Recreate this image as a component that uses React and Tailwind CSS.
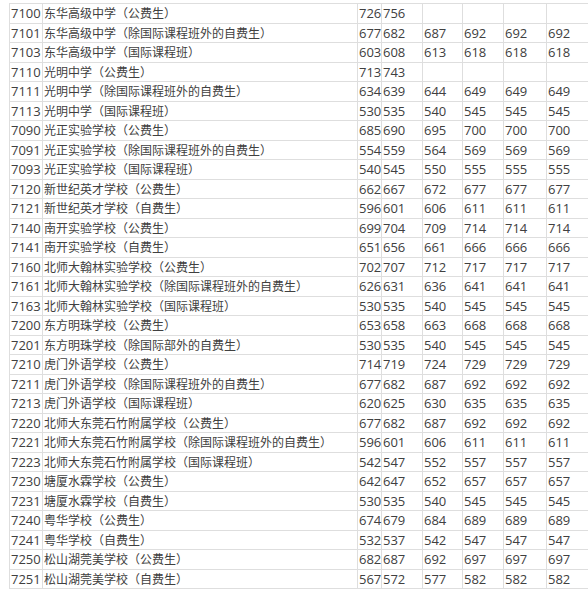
import React from 'react';

const rows = [
  ['7100', '东华高级中学（公费生）', ['726', '756']],
  ['7101', '东华高级中学（除国际课程班外的自费生）', ['677', '682', '687', '692', '692', '692']],
  ['7103', '东华高级中学（国际课程班）', ['603', '608', '613', '618', '618', '618']],
  ['7110', '光明中学（公费生）', ['713', '743']],
  ['7111', '光明中学（除国际课程班外的自费生）', ['634', '639', '644', '649', '649', '649']],
  ['7113', '光明中学（国际课程班）', ['530', '535', '540', '545', '545', '545']],
  ['7090', '光正实验学校（公费生）', ['685', '690', '695', '700', '700', '700']],
  ['7091', '光正实验学校（除国际课程班外的自费生）', ['554', '559', '564', '569', '569', '569']],
  ['7093', '光正实验学校（国际课程班）', ['540', '545', '550', '555', '555', '555']],
  ['7120', '新世纪英才学校（公费生）', ['662', '667', '672', '677', '677', '677']],
  ['7121', '新世纪英才学校（自费生）', ['596', '601', '606', '611', '611', '611']],
  ['7140', '南开实验学校（公费生）', ['699', '704', '709', '714', '714', '714']],
  ['7141', '南开实验学校（自费生）', ['651', '656', '661', '666', '666', '666']],
  ['7160', '北师大翰林实验学校（公费生）', ['702', '707', '712', '717', '717', '717']],
  ['7161', '北师大翰林实验学校（除国际课程班外的自费生）', ['626', '631', '636', '641', '641', '641']],
  ['7163', '北师大翰林实验学校（国际课程班）', ['530', '535', '540', '545', '545', '545']],
  ['7200', '东方明珠学校（公费生）', ['653', '658', '663', '668', '668', '668']],
  ['7201', '东方明珠学校（除国际部外的自费生）', ['530', '535', '540', '545', '545', '545']],
  ['7210', '虎门外语学校（公费生）', ['714', '719', '724', '729', '729', '729']],
  ['7211', '虎门外语学校（除国际课程班外的自费生）', ['677', '682', '687', '692', '692', '692']],
  ['7213', '虎门外语学校（国际课程班）', ['620', '625', '630', '635', '635', '635']],
  ['7220', '北师大东莞石竹附属学校（公费生）', ['677', '682', '687', '692', '692', '692']],
  ['7221', '北师大东莞石竹附属学校（除国际课程班外的自费生）', ['596', '601', '606', '611', '611', '611']],
  ['7223', '北师大东莞石竹附属学校（国际课程班）', ['542', '547', '552', '557', '557', '557']],
  ['7230', '塘厦水霖学校（公费生）', ['642', '647', '652', '657', '657', '657']],
  ['7231', '塘厦水霖学校（自费生）', ['530', '535', '540', '545', '545', '545']],
  ['7240', '粤华学校（公费生）', ['674', '679', '684', '689', '689', '689']],
  ['7241', '粤华学校（自费生）', ['532', '537', '542', '547', '547', '547']],
  ['7250', '松山湖莞美学校（公费生）', ['682', '687', '692', '697', '697', '697']],
  ['7251', '松山湖莞美学校（自费生）', ['567', '572', '577', '582', '582', '582']],
];

const cell = 'h-[19.5px] leading-[19.5px] border-r border-b border-[#dedede] whitespace-nowrap overflow-visible';

const App = () => {
  return (
    <div className="w-[588px] h-[596px] bg-white overflow-hidden pl-[9px] pt-[3px]">
      <div
        className="grid grid-cols-[33px_315px_24px_41px_40px_41px_43px_60px] border-t border-l border-[#dedede] text-[13px] text-[#404040]"
        style={{ fontFamily: '"Open Sans", "Noto Sans CJK SC", sans-serif' }}
      >
        {rows.map(([code, name, scores]) => (
          <React.Fragment key={code}>
            <div className={`${cell} pl-[1px]`}>{code}</div>
            <div className={`${cell} pl-[1px] text-[12px]`}>{name}</div>
            {[0, 1, 2, 3, 4, 5].map((i) => (
              <div key={i} className={`${cell} pl-[1px]`}>
                {scores[i] || ''}
              </div>
            ))}
          </React.Fragment>
        ))}
      </div>
    </div>
  );
};

export default App;
